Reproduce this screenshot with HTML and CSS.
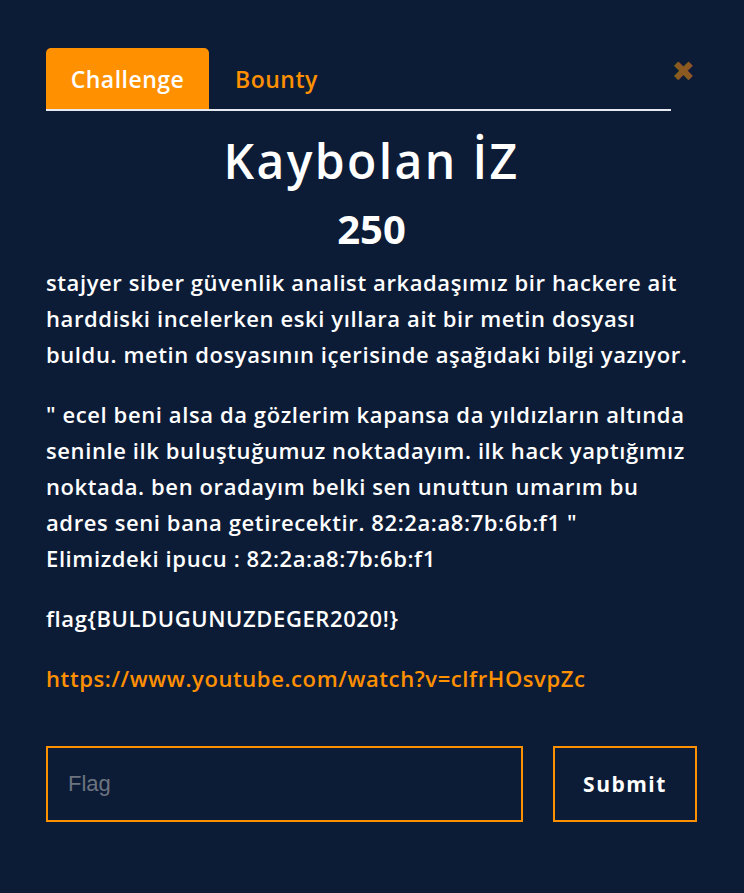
FILE: index.html
```html
<!DOCTYPE html>
<html lang="tr">
<head>
<meta charset="utf-8">
<link rel="stylesheet" href="styles.css">
</head>
<body>
<div class="modal">
  <div class="tabs-row">
    <div class="tabs">
      <div class="tab active">Challenge</div>
      <div class="tab">Bounty</div>
    </div>
    <div class="close">&#10006;</div>
  </div>
  <h1 class="title">Kaybolan İZ</h1>
  <div class="points">250</div>
  <div class="desc">
    <p>stajyer siber güvenlik analist arkadaşımız bir hackere ait<br>harddiski incelerken eski yıllara ait bir metin dosyası<br>buldu. metin dosyasının içerisinde aşağıdaki bilgi yazıyor.</p>
    <p>" ecel beni alsa da gözlerim kapansa da yıldızların altında<br>seninle ilk buluştuğumuz noktadayım. ilk hack yaptığımız<br>noktada. ben oradayım belki sen unuttun umarım bu<br>adres seni bana getirecektir. 82:2a:a8:7b:6b:f1 "<br>Elimizdeki ipucu : 82:2a:a8:7b:6b:f1</p>
    <p>flag{BULDUGUNUZDEGER2020!}</p>
    <p><a class="link" href="#">https://www.youtube.com/watch?v=clfrHOsvpZc</a></p>
  </div>
  <form class="submit-row">
    <input class="flag-input" type="text" placeholder="Flag">
    <button class="submit" type="button">Submit</button>
  </form>
</div>
</body>
</html>
```

FILE: styles.css
```css
html, body {
  margin: 0;
  padding: 0;
  background: #0c1c37;
}
body {
  font-family: "Open Sans", Lato, sans-serif;
  color: #ffffff;
}
.modal {
  width: 651px;
  margin-left: 46px;
  padding-top: 48px;
}
.tabs-row {
  display: flex;
  align-items: flex-start;
}
.tabs {
  display: flex;
  width: 625px;
  border-bottom: 2px solid #e6e9ef;
  height: 61px;
}
.tab {
  font-size: 23px;
  font-weight: 600;
  letter-spacing: 0.5px;
  color: #ff9000;
  padding: 0 26px;
  display: flex;
  align-items: center;
  height: 61px;
}
.tab.active {
  background: #ff9100;
  color: #ffffff;
  border-radius: 5px 5px 0 0;
  width: 163px;
  box-sizing: border-box;
  justify-content: center;
  padding: 0;
}
.close {
  margin-left: auto;
  margin-top: 10px;
  margin-right: 2px;
  color: #8a5a20;
  font-family: "DejaVu Sans", sans-serif;
  font-size: 28px;
  line-height: 28px;
}
.title {
  margin: 22px 0 0;
  text-align: center;
  font-size: 48px;
  font-weight: 600;
  letter-spacing: 2.4px;
  line-height: 56px;
}
.points {
  text-align: center;
  font-size: 40px;
  font-weight: 700;
  line-height: 48px;
  margin-top: 16px;
}
.desc {
  font-size: 22px;
  font-weight: 600;
  line-height: 36px;
  margin-top: 11px;
  letter-spacing: 0.6px;
  white-space: nowrap;
}
.desc p {
  margin: 0 0 24px;
}
.link {
  color: #ff9000;
  text-decoration: none;
  font-weight: 600;
}
.submit-row {
  display: flex;
  justify-content: space-between;
  margin-top: 50px;
}
.flag-input {
  width: 477px;
  height: 76px;
  box-sizing: border-box;
  background: transparent;
  border: 2px solid #ff9000;
  color: #ffffff;
  font-family: "Liberation Sans", Arial, sans-serif;
  font-size: 22px;
  padding: 0 20px;
  outline: none;
}
.flag-input::placeholder {
  color: #6c7480;
}
.submit {
  width: 144px;
  height: 76px;
  box-sizing: border-box;
  background: transparent;
  border: 2px solid #ff9000;
  color: #ffffff;
  font-family: "Open Sans", sans-serif;
  font-size: 21px;
  font-weight: 700;
  letter-spacing: 1.5px;
}
```
